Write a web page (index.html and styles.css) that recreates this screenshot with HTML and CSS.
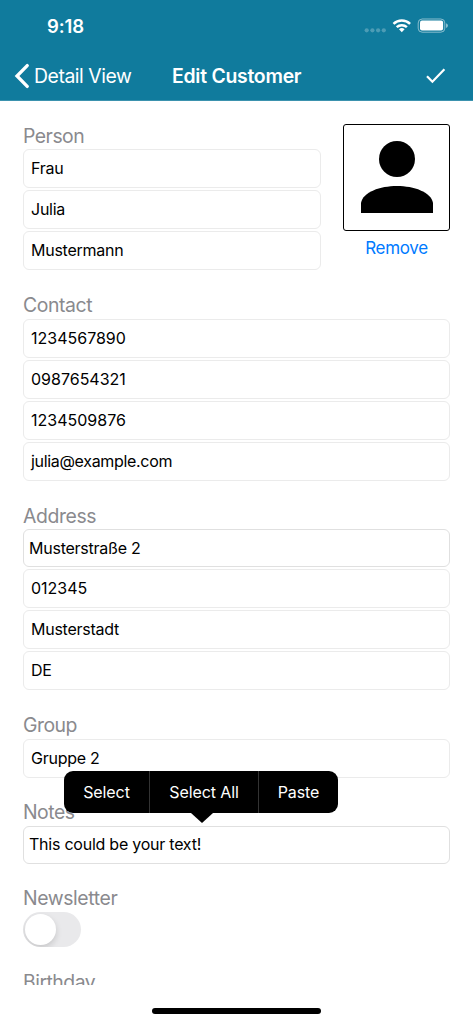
FILE: index.html
```html
<!DOCTYPE html>
<html lang="en">
<head>
<meta charset="utf-8">
<title>Edit Customer</title>
<link rel="stylesheet" href="styles.css">
</head>
<body>
<div class="screen">
  <header class="header">
    <div class="status">
      <span class="time">9:18</span>
      <svg class="signals" width="86" height="20" viewBox="0 0 86 20">
        <g fill="#fff" opacity=".25"><circle cx="3.7" cy="14.3" r="2.1"/><circle cx="9.4" cy="14.3" r="2.1"/><circle cx="15.1" cy="14.3" r="2.1"/><circle cx="20.8" cy="14.3" r="2.1"/></g>
        <g transform="translate(0 .5)">
        <g fill="none" stroke="#fff" stroke-width="2.5"><path d="M30.5 7.4a12 12 0 0 1 16.6 0"/><path d="M33.7 10.7a7.4 7.4 0 0 1 10.2 0"/></g>
        <path d="M38.8 15.7l-2.8-2.9a4 4 0 0 1 5.6 0z" fill="#fff"/>
        <rect x="55.2" y="2.5" width="26.6" height="13.2" rx="4" fill="none" stroke="#fff" stroke-opacity=".5"/>
        <rect x="57" y="4.1" width="23.1" height="10" rx="2" fill="#fff"/>
        <path d="M83 6.8q2 .6 2 2.3t-2 2.3z" fill="#fff" opacity=".5"/>
        </g>
      </svg>
    </div>
    <nav class="nav">
      <a class="back"><svg width="15" height="26" viewBox="0 0 15 26"><path d="M13.2 2.6L3 13l10.2 10.4" fill="none" stroke="#fff" stroke-width="3.3" stroke-linecap="round"/></svg><span>Detail View</span></a>
      <h1 class="title">Edit Customer</h1>
      <svg class="check" width="22" height="18" viewBox="0 0 22 18"><path d="M2 9.2l5.4 5.5L19.4 2.3" fill="none" stroke="#fff" stroke-width="2.2"/></svg>
    </nav>
  </header>
  <main class="form">
    <div class="person-row">
      <section class="section person">
        <h2 class="label">Person</h2>
        <div class="fields"><div class="field">Frau</div><div class="field">Julia</div><div class="field">Mustermann</div></div>
      </section>
      <div class="photo">
        <div class="avatar"><svg width="72" height="72" viewBox="0 0 72 72"><circle cx="36" cy="18" r="18"/><path d="M0 72V62C2 51 19 45 36 45s34 6 36 17v10z"/></svg></div>
        <a class="remove">Remove</a>
      </div>
    </div>
    <section class="section contact">
      <h2 class="label">Contact</h2>
      <div class="fields"><div class="field digits">1234567890</div><div class="field digits">0987654321</div><div class="field digits">1234509876</div><div class="field email">julia@example.com</div></div>
    </section>
    <section class="section address">
      <h2 class="label">Address</h2>
      <div class="fields"><div class="field area">Musterstraße 2</div><div class="field digits">012345</div><div class="field">Musterstadt</div><div class="field">DE</div></div>
    </section>
    <section class="section group">
      <h2 class="label">Group</h2>
      <div class="fields"><div class="field">Gruppe 2</div></div>
    </section>
    <section class="section notes">
      <h2 class="label">Notes</h2>
      <div class="fields"><div class="field area">This could be your text!</div></div>
      <div class="menu"><span>Select</span><span>Select All</span><span>Paste</span></div>
    </section>
    <section class="section newsletter">
      <h2 class="label">Newsletter</h2>
      <div class="toggle"><div class="knob"></div></div>
    </section>
    <section class="section birthday"><h2 class="label">Birthday</h2></section>
  </main>
  <div class="home"></div>
</div>
</body>
</html>
```
FILE: styles.css
```css
* { box-sizing: border-box; }
body { margin: 0; background: #fff; font-family: Inter, "Noto Sans", sans-serif; }
h1, h2 { margin: 0; font-weight: 400; }
svg { display: block; }
.screen { width: 473px; height: 1024px; display: flex; flex-direction: column; overflow: hidden; }
.header { height: 101px; flex: none; background: #107b9d; border-bottom: 1px solid #3b92ae; color: #fff; }
.status { height: 51px; padding: 0 24px 0 47px; display: flex; align-items: center; justify-content: space-between; }
.time { font-size: 18.5px; font-weight: 600; letter-spacing: -.1px; line-height: 22px; }
.signals { margin-top: 1px; }
.nav { height: 49px; padding: 0 26px 0 14px; display: grid; grid-template-columns: 158px 1fr 22px; align-items: center; }
.back { display: flex; align-items: center; gap: 5px; font-size: 19.4px; letter-spacing: -.45px; white-space: nowrap; }
.title { font-size: 19.4px; font-weight: 600; letter-spacing: -.25px; }
.form { height: 884px; flex: none; padding: 23px 23px 0; overflow: hidden; }
.person-row { display: flex; justify-content: space-between; height: 170px; }
.person { width: 298px; }
.label { height: 25px; line-height: 24px; font-size: 19.4px; letter-spacing: -.5px; color: #8a8a8e; white-space: nowrap; }
.contact .label { line-height: 22px; letter-spacing: -.4px; }
.address .label { letter-spacing: -.4px; }
.newsletter .label { line-height: 22px; letter-spacing: -.4px; }
.fields { display: flex; flex-direction: column; gap: 2px; }
.field { height: 39px; border: 1px solid #ebebeb; border-radius: 6px; padding: 0 7px; font-size: 16px; line-height: 37px; letter-spacing: -.25px; color: #000; white-space: nowrap; }
.contact .field, .group .field { line-height: 36px; }
.digits { letter-spacing: 0; }
.email { letter-spacing: -.32px; }
.area { height: 38px; padding: 0 5px; border-color: #e0e0e0; line-height: 36px; letter-spacing: -.24px; }
.photo { width: 107px; display: flex; flex-direction: column; align-items: center; }
.avatar { width: 107px; height: 107px; padding-bottom: 1px; border: 1px solid #000; border-radius: 3px; display: flex; align-items: center; justify-content: center; }
.remove { margin-top: 5px; font-size: 17px; line-height: 24px; letter-spacing: -.3px; color: #007aff; }
.contact { height: 210px; }
.address { height: 210px; }
.group { height: 87px; }
.group .label, .notes .label { line-height: 22px; }
.notes { height: 86px; position: relative; }
.notes .area { line-height: 35px; }
.menu { position: absolute; left: 41px; top: -30px; width: 274px; height: 42px; display: grid; grid-template-columns: 85px 109px 80px; background: #000; border-radius: 9px; color: #fff; font-size: 16px; line-height: 42px; letter-spacing: -.1px; text-align: center; white-space: nowrap; }
.menu span + span { border-left: 1px solid #333; }
.menu::after { content: ""; position: absolute; left: 127px; top: 42px; border: 11px solid transparent; border-top: 10px solid #000; border-bottom: 0; }
.newsletter { height: 84px; }
.birthday .label { line-height: 22px; }
.toggle { width: 58px; height: 35px; padding: 2px; border-radius: 18px; background: #e9e9eb; overflow: hidden; }
.knob { width: 31px; height: 31px; border-radius: 50%; background: #fff; box-shadow: 0 3px 6px rgba(0,0,0,.15); }
.home { width: 169px; height: 6px; margin: 23px auto 0; border-radius: 3px; background: #000; flex: none; }
```
